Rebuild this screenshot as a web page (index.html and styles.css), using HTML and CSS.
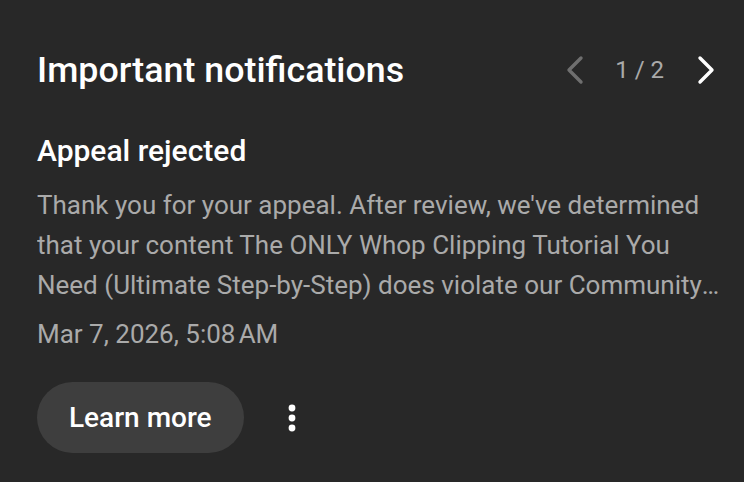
FILE: index.html
```html
<!DOCTYPE html>
<html>
<head>
<meta charset="utf-8">
<link rel="stylesheet" href="styles.css">
</head>
<body>
<div class="card">
  <div class="header">
    <h1 class="title">Important notifications</h1>
    <div class="pager">
      <svg class="chev prev" width="20" height="30" viewBox="0 0 20 30"><path d="M16 3 L4 15 L16 27" fill="none" stroke="currentColor" stroke-width="3.4" stroke-linecap="round" stroke-linejoin="round"/></svg>
      <span class="count">1 / 2</span>
      <svg class="chev next" width="20" height="30" viewBox="0 0 20 30"><path d="M4 3 L16 15 L4 27" fill="none" stroke="currentColor" stroke-width="3.4" stroke-linecap="round" stroke-linejoin="round"/></svg>
    </div>
  </div>
  <h2 class="subject">Appeal rejected</h2>
  <p class="body">Thank you for your appeal. After review, we've determined that your content The ONLY Whop Clipping Tutorial You Need (Ultimate Step-by-Step) does violate our Community Guidelines. We know this may be disappointing, but it's our job to make sure YouTube is a safe place for all.</p>
  <div class="date">Mar 7, 2026, 5:08&#8239;AM</div>
  <div class="actions">
    <button class="learn">Learn more</button>
    <svg class="kebab" width="8" height="28" viewBox="0 0 8 28"><circle cx="4" cy="4" r="3.4" fill="#fff"/><circle cx="4" cy="14" r="3.4" fill="#fff"/><circle cx="4" cy="24" r="3.4" fill="#fff"/></svg>
  </div>
</div>
</body>
</html>
```
FILE: styles.css
```css
html, body {
  margin: 0;
  padding: 0;
  background: #282828;
}
body {
  font-family: Roboto, "Noto Sans", sans-serif;
  color: #fff;
  width: 744px;
  height: 482px;
  overflow: hidden;
}
.card {
  padding: 44px 24px 0 37px;
}
.header {
  display: flex;
  align-items: center;
  justify-content: space-between;
  height: 52px;
}
.title {
  margin: 0;
  font-size: 35.8px;
  font-weight: 500;
  line-height: 52px;
}
.pager {
  display: flex;
  align-items: center;
  margin-right: 4px;
}
.chev { display: block; }
.prev { color: #6f6f6f; }
.next { color: #fff; }
.count {
  color: #aaa;
  font-size: 24px;
  margin: 0 32px 0 30px;
}
.subject {
  margin: 37px 0 0;
  font-size: 30px;
  font-weight: 500;
  line-height: 36px;
}
.body {
  margin: 16px 0 0;
  color: #aaa;
  font-size: 26px;
  line-height: 40px;
  display: -webkit-box;
  -webkit-line-clamp: 3;
  -webkit-box-orient: vertical;
  overflow: hidden;
}
.date {
  color: #aaa;
  font-size: 26px;
  line-height: 40px;
  margin-top: 9px;
}
.actions {
  display: flex;
  align-items: center;
  margin-top: 28px;
  gap: 44px;
}
.learn {
  height: 71px;
  padding: 0 32px;
  border: none;
  border-radius: 36px;
  background: #3e3e3e;
  color: #fff;
  font-family: Roboto, sans-serif;
  font-size: 28px;
  font-weight: 500;
}
.kebab { display: block; }
```
